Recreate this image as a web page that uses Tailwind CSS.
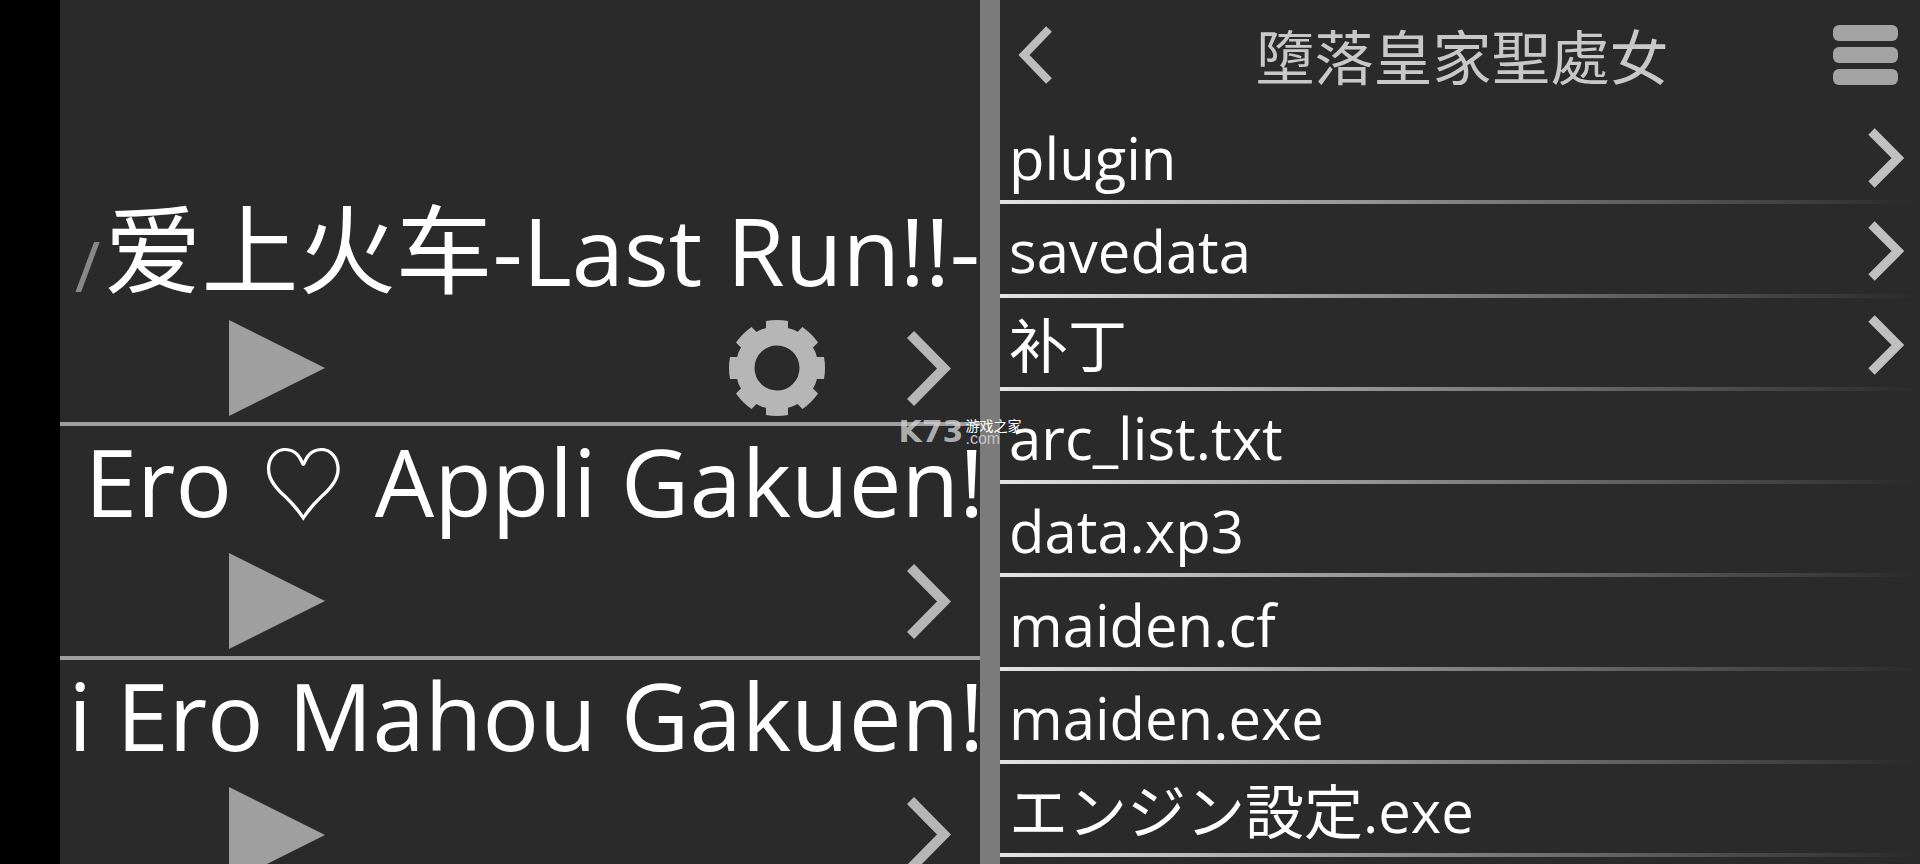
<!DOCTYPE html>
<html lang="zh">
<head>
    <meta charset="UTF-8">
    <meta name="viewport" content="width=device-width, initial-scale=1.0">
    <title>墮落皇家聖處女</title>
    <script src="https://cdn.jsdelivr.net/npm/@tailwindcss/browser@4"></script>
</head>
<body class="bg-black">
    <div class="relative flex h-screen overflow-hidden pl-[60px] font-['Open_Sans','Noto_Sans_CJK_SC',sans-serif] text-white">

        <!-- Game list -->
        <main class="min-w-0 flex-1 overflow-hidden bg-[#2a2a2a] pt-[193px]">
            <section class="flex h-[27vh] flex-col border-b-4 border-[#9e9e9e]">
                <h2 class="flex h-[127px] items-start justify-end whitespace-nowrap text-[94px] leading-[110px]"><span class="mr-1 self-end text-[70px] leading-[110px] text-[#888888]">/</span><span><span class="text-[97px]">爱上火车</span>-Last Run!!-</span></h2>
                <div class="flex h-24 items-center pl-[169px] pr-[29px]">
                    <button type="button" aria-label="Play">
                        <svg class="h-24 w-24" viewBox="0 0 96 96" fill="#9f9f9f"><path d="M0 0L96 48L0 96Z"/></svg>
                    </button>
                    <button type="button" aria-label="Settings" class="ml-auto">
                        <svg class="h-24 w-24" viewBox="-48 -48 96 96" fill="#b6b6b6">
                            <circle r="32" fill="none" stroke="#b6b6b6" stroke-width="19"/>
                            <path id="tooth" d="M-11 -36V-47Q0 -49 11 -47V-36Z"/>
                            <use href="#tooth" transform="rotate(45)"/>
                            <use href="#tooth" transform="rotate(90)"/>
                            <use href="#tooth" transform="rotate(135)"/>
                            <use href="#tooth" transform="rotate(180)"/>
                            <use href="#tooth" transform="rotate(225)"/>
                            <use href="#tooth" transform="rotate(270)"/>
                            <use href="#tooth" transform="rotate(315)"/>
                        </svg>
                    </button>
                    <button type="button" aria-label="Open" class="ml-[82px]">
                        <svg class="h-[75px] w-11" viewBox="0 0 44 75" fill="none" stroke="#b6b6b6" stroke-width="10"><path d="M3.500 3.500L37 37.500L3.500 71.500"/></svg>
                    </button>
                </div>
            </section>
            <section class="flex h-[27vh] flex-col border-b-4 border-[#9e9e9e]">
                <h2 class="-mr-1 flex h-[127px] items-start justify-end whitespace-nowrap text-[94px] leading-[110px]"><span>Ero <span class="px-1 text-[86px]">♡</span> Appli Gakuen!</span></h2>
                <div class="flex h-24 items-center justify-between pl-[169px] pr-[29px]">
                    <button type="button" aria-label="Play">
                        <svg class="h-24 w-24" viewBox="0 0 96 96" fill="#9f9f9f"><path d="M0 0L96 48L0 96Z"/></svg>
                    </button>
                    <button type="button" aria-label="Open">
                        <svg class="h-[75px] w-11" viewBox="0 0 44 75" fill="none" stroke="#b6b6b6" stroke-width="10"><path d="M3.500 3.500L37 37.500L3.500 71.500"/></svg>
                    </button>
                </div>
            </section>
            <section class="flex h-[27vh] flex-col border-b-4 border-[#9e9e9e]">
                <h2 class="-mr-1 flex h-[127px] items-start justify-end whitespace-nowrap text-[94px] leading-[110px]">i Ero Mahou Gakuen!</h2>
                <div class="flex h-24 items-center justify-between pl-[169px] pr-[29px]">
                    <button type="button" aria-label="Play">
                        <svg class="h-24 w-24" viewBox="0 0 96 96" fill="#9f9f9f"><path d="M0 0L96 48L0 96Z"/></svg>
                    </button>
                    <button type="button" aria-label="Open">
                        <svg class="h-[75px] w-11" viewBox="0 0 44 75" fill="none" stroke="#b6b6b6" stroke-width="10"><path d="M3.500 3.500L37 37.500L3.500 71.500"/></svg>
                    </button>
                </div>
            </section>
        </main>

        <div class="w-5 shrink-0 bg-[#7b7b7b]"></div>

        <!-- File browser -->
        <aside class="min-w-0 flex-1 overflow-hidden bg-[#2a2a2a]">
            <header class="grid h-[111px] grid-cols-[1fr_auto_1fr] items-center pb-px pl-[18px] pr-[22px]">
                <button type="button" aria-label="Back" class="justify-self-start">
                    <svg class="h-[58px] w-[34px]" viewBox="0 0 34 58" fill="none" stroke="#bdbdbd" stroke-width="8"><path d="M31 3L6 29L31 55"/></svg>
                </button>
                <h1 class="pt-1 pl-2 text-[59px] leading-[80px] text-[#c8c8c8]" lang="zh-Hant">墮落皇家聖處女</h1>
                <button type="button" aria-label="Menu" class="flex w-[65px] flex-col gap-[6px] justify-self-end">
                    <span class="h-4 w-full rounded-md bg-[#a3a3a3]"></span>
                    <span class="h-4 w-full rounded-md bg-[#a3a3a3]"></span>
                    <span class="h-4 w-full rounded-md bg-[#a3a3a3]"></span>
                </button>
            </header>
            <ul class="text-[58px] leading-[80px]">
                <li class="h-[10.8vh]">
                    <a href="#" class="flex h-full flex-col"><span class="flex flex-1 items-center justify-between pt-[5px] pl-[9px] pr-4">plugin
                        <svg class="h-[60px] w-9" viewBox="0 0 36 60" fill="none" stroke="#c0c0c0" stroke-width="9"><path d="M3.500 3.500L30 30L3.500 56.500"/></svg></span>
                        <span class="h-1 bg-linear-to-r from-[#e4e4e4] to-[#2a2a2a]"></span></a>
                </li>
                <li class="h-[10.8vh]">
                    <a href="#" class="flex h-full flex-col"><span class="flex flex-1 items-center justify-between pt-[5px] pl-[9px] pr-4">savedata
                        <svg class="h-[60px] w-9" viewBox="0 0 36 60" fill="none" stroke="#c0c0c0" stroke-width="9"><path d="M3.500 3.500L30 30L3.500 56.500"/></svg></span>
                        <span class="h-1 bg-linear-to-r from-[#e4e4e4] to-[#2a2a2a]"></span></a>
                </li>
                <li class="h-[10.8vh]">
                    <a href="#" class="flex h-full flex-col"><span class="flex flex-1 items-center justify-between pt-[5px] pl-[9px] pr-4"><span class="text-[59px]">补丁</span>
                        <svg class="h-[60px] w-9" viewBox="0 0 36 60" fill="none" stroke="#c0c0c0" stroke-width="9"><path d="M3.500 3.500L30 30L3.500 56.500"/></svg></span>
                        <span class="h-1 bg-linear-to-r from-[#e4e4e4] to-[#2a2a2a]"></span></a>
                </li>
                <li class="h-[10.8vh]">
                    <a href="#" class="flex h-full flex-col"><span class="flex flex-1 items-center pt-[5px] pl-[9px]">arc_list.txt</span>
                        <span class="h-1 bg-linear-to-r from-[#e4e4e4] to-[#2a2a2a]"></span></a>
                </li>
                <li class="h-[10.8vh]">
                    <a href="#" class="flex h-full flex-col"><span class="flex flex-1 items-center pt-[5px] pl-[9px]">data.xp3</span>
                        <span class="h-1 bg-linear-to-r from-[#e4e4e4] to-[#2a2a2a]"></span></a>
                </li>
                <li class="h-[10.8vh]">
                    <a href="#" class="flex h-full flex-col"><span class="flex flex-1 items-center pt-[5px] pl-[9px]">maiden.cf</span>
                        <span class="h-1 bg-linear-to-r from-[#e4e4e4] to-[#2a2a2a]"></span></a>
                </li>
                <li class="h-[10.8vh]">
                    <a href="#" class="flex h-full flex-col"><span class="flex flex-1 items-center pt-[5px] pl-[9px]">maiden.exe</span>
                        <span class="h-1 bg-linear-to-r from-[#e4e4e4] to-[#2a2a2a]"></span></a>
                </li>
                <li class="h-[10.8vh]">
                    <a href="#" class="flex h-full flex-col"><span class="flex flex-1 items-center pt-[5px] pl-[9px]" lang="ja"><span class="text-[59px]">エンジン設定</span>.exe</span>
                        <span class="h-1 bg-linear-to-r from-[#e4e4e4] to-[#2a2a2a]"></span></a>
                </li>
            </ul>
        </aside>

        <!-- Site badge -->
        <div class="absolute left-1/2 top-1/2 flex -translate-x-1/2 -translate-y-1/2 items-center gap-[2px]">
            <span class="font-['DejaVu_Sans',sans-serif] text-[30px] leading-[26px] font-bold text-[#d0d0d0]/80">K73</span>
            <span class="flex flex-col">
                <span class="font-['Noto_Sans_CJK_SC',sans-serif] text-[14px] leading-[14px]">游戏之家</span>
                <span class="font-['Liberation_Sans',sans-serif] text-[16px] leading-[14px] text-[#c4c4c4]">.com</span>
            </span>
        </div>
    </div>
</body>
</html>
